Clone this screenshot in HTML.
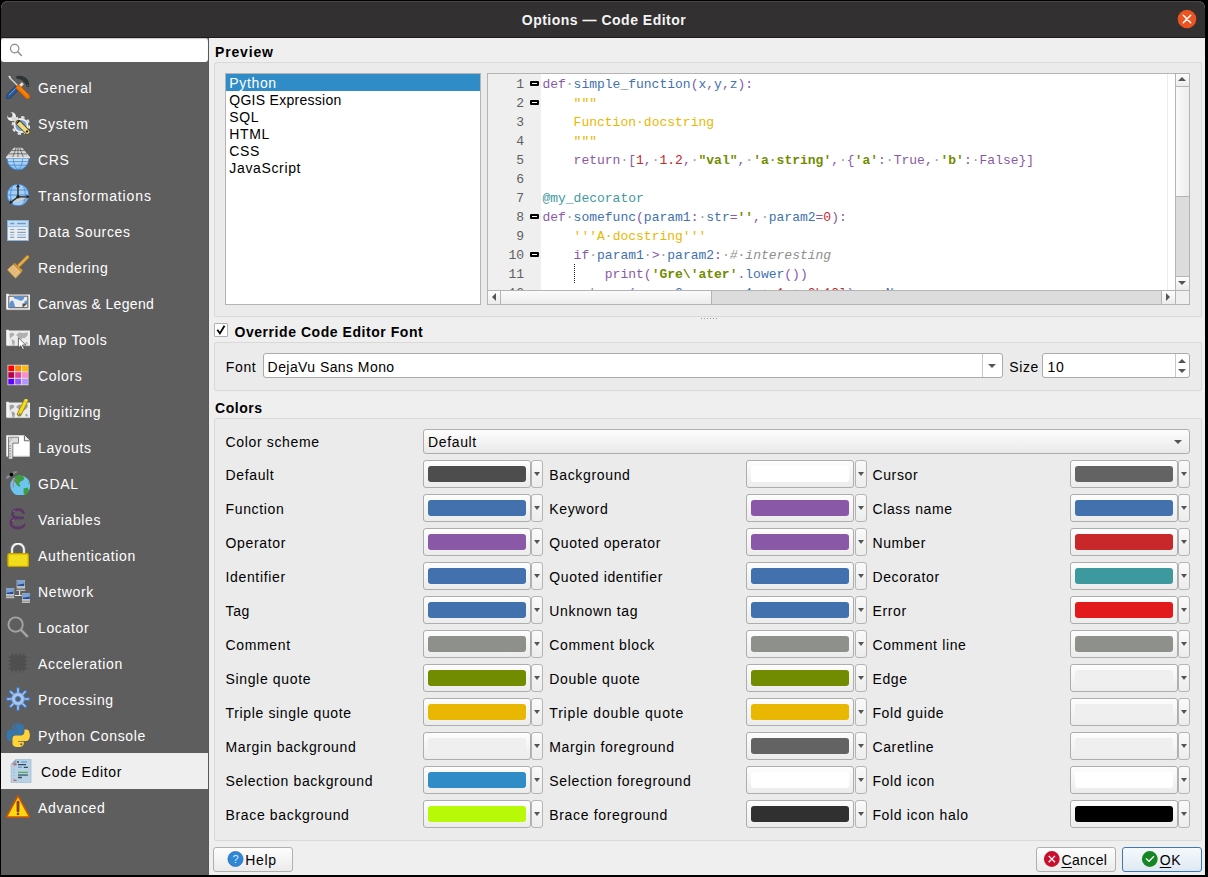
<!DOCTYPE html><html><head><meta charset="utf-8"><style>
*{margin:0;padding:0;box-sizing:border-box}
html,body{width:1208px;height:877px;overflow:hidden;background:#000}
body{position:relative;font-family:"Liberation Sans",sans-serif;font-size:14px;color:#000}
.a{position:absolute}
.t{position:absolute;white-space:nowrap;line-height:20px;height:20px;letter-spacing:0.65px}
.b{font-weight:bold;letter-spacing:0.55px}
.win{left:1px;top:1px;width:1204px;height:874px;background:#efefef;border-radius:7px 7px 0 0;overflow:hidden}
.title{left:1px;top:1px;width:1204px;height:36px;background:#323031;border-radius:7px 7px 0 0;box-shadow:inset 0 1px #474543}
.side{left:1px;top:38px;width:207px;height:837px;background:#5e5e5e}
.gb{position:absolute;border:1px solid #d9d9d9;border-radius:2px;background:#ebebeb}
.side .t{color:#fff}
.mono{font-family:"Liberation Mono",monospace;font-size:13px;letter-spacing:0;line-height:19px;height:19px}
.cbtn{position:absolute;width:108px;height:28px;border:1px solid #adadad;border-radius:3px;background:linear-gradient(#fdfdfd,#ececec)}
.cbtn i{position:absolute;left:4px;top:5px;width:98px;height:16px;border-radius:3px}
.dd{position:absolute;width:12px;height:28px;border:1px solid #b5b5b5;border-radius:3px;background:linear-gradient(#fafafa,#ececec)}
.dd:after{content:"";position:absolute;left:2px;top:11px;border-left:3.5px solid transparent;border-right:3.5px solid transparent;border-top:4px solid #555}
u{text-underline-offset:2px}
.btn{position:absolute;height:25px;border:1px solid #b0b0b0;border-radius:3px;background:linear-gradient(#fdfdfd,#ebebeb)}
</style></head><body>
<div class="a win"></div>
<div class="a title"></div>
<div class="a" style="left:1px;top:37px;width:1204px;height:1px;background:#1b1b1b"></div>
<div class="t b" style="left:0;top:10px;width:1208px;text-align:center;color:#f4f4f4;font-size:14px;letter-spacing:0.5px">Options — Code Editor</div>
<svg class="a" style="left:1177px;top:9px" width="20" height="20" viewBox="0 0 20 20"><circle cx="10" cy="10" r="9.3" fill="#e95420"/><path d="M6.3 6.3L13.7 13.7M13.7 6.3L6.3 13.7" stroke="#fff" stroke-width="1.5" stroke-linecap="round"/></svg>
<div class="a side"></div>
<div class="a" style="left:208px;top:38px;width:1px;height:837px;background:#585858"></div>
<div class="a" style="left:1px;top:38px;width:207px;height:24px;background:#fff;border-radius:3px;box-shadow:inset 0 1px 1px #c8c8c8"></div>
<svg class="a" style="left:9px;top:43px" width="16" height="16" viewBox="0 0 16 16"><circle cx="5.7" cy="5.6" r="4.2" fill="none" stroke="#8a8a8a" stroke-width="1.2"/><path d="M8.8 8.8l3.6 3.6" stroke="#8a8a8a" stroke-width="1.4" stroke-linecap="round"/></svg>
<svg class="a" style="left:6px;top:75px" width="24" height="24" viewBox="0 0 24 24"><path d="M2.6 21.4L10.5 13.5" stroke="#1d3f73" stroke-width="5.4" stroke-linecap="round"/><path d="M2.6 21.4L10.5 13.5" stroke="#2f5a96" stroke-width="4" stroke-linecap="round"/><path d="M3 20l6.5-6.5" stroke="#729fcf" stroke-width="1"/><path d="M2.2 1.3l1.6-0.6 1.2 1.5-1 1.2z" fill="#eee"/><path d="M3.5 2.5l9 9" stroke="#dcdcdc" stroke-width="1.2"/><path d="M12.3 10.8l3.5-3.5 2 2-3.5 3.5z" fill="#e4e4e4"/><path d="M9.8 1.6C14 -0.2 19.5 1.4 22.2 5.4L23.6 10.2 22.3 12.4 20.3 11.2 19.4 8.8C17.8 6 14.6 3.9 10.8 3.7z" fill="#2e3436"/><circle cx="21.8" cy="10.3" r="0.6" fill="#888"/><path d="M12.5 12.5L21.5 21.5" stroke="#ce5c00" stroke-width="5.2" stroke-linecap="round"/><path d="M12.5 12.5L21.5 21.5" stroke="#f57900" stroke-width="3.6" stroke-linecap="round"/><path d="M13.8 12.5l7.6 7.6" stroke="#fcaf3e" stroke-width="0.9" stroke-dasharray="1 0.6"/><path d="M11 12.5l2.2-2.6 2.5 2.3-2.4 2.4z" fill="#f57900"/></svg>
<div class="t" style="left:38px;top:78px;color:#fff">General</div>
<svg class="a" style="left:6px;top:111px" width="24" height="24" viewBox="0 0 24 24"><circle cx="15" cy="14.5" r="8.4" fill="none" stroke="#e6e6e4" stroke-width="2" stroke-dasharray="3.3 3.3"/><circle cx="15" cy="14.5" r="7.4" fill="#eeeeec"/><circle cx="15" cy="14.5" r="5.6" fill="#729fcf"/><circle cx="5.6" cy="5.6" r="4.4" fill="#eeeeec"/><circle cx="3.9" cy="3.9" r="2.6" fill="#5e5e5e"/><path d="M3.9 3.9L0 0" stroke="#5e5e5e" stroke-width="4"/><path d="M6.5 6.5l5 5" stroke="#d7d7d5" stroke-width="3.2"/><path d="M12.4 11.8l9 9" stroke="#5c4e17" stroke-width="5.6" stroke-linecap="round"/><path d="M12.4 11.8l9 9" stroke="#f0dc82" stroke-width="4" stroke-linecap="round"/><path d="M10.6 12.6l3-3" stroke="#1a1a1a" stroke-width="1.4"/><circle cx="21" cy="20.4" r="1.2" fill="#2e3436"/></svg>
<div class="t" style="left:38px;top:114px;color:#fff">System</div>
<svg class="a" style="left:6px;top:147px" width="24" height="24" viewBox="0 0 24 24"><defs><linearGradient id="gcrs" x1="0" y1="0" x2="0" y2="1"><stop offset="0" stop-color="#c8e6fb"/><stop offset="1" stop-color="#7db9ec"/></linearGradient></defs><path d="M1 11.6a11 11.4 0 0 0 22 0z" fill="url(#gcrs)" stroke="#3a78c8" stroke-width="0.9"/><path d="M7.3 11.6c0 4.5 1.8 9 4.7 11.4M16.7 11.6c0 4.5-1.8 9-4.7 11.4M1.6 14.6h20.8M3.4 18.2h17.2" stroke="#3d7ccc" stroke-width="0.7" fill="none"/><path d="M7.9 0.8H16.1L24.8 10.9H-0.8z" fill="#d4d4d4"/><path d="M10.2 0.8L6.5 10.9M12 0.8v10.1M13.8 0.8l3.7 10.1M5.6 3.6Q12 2.9 18.4 3.6M2.8 7Q12 6.2 21.2 7" stroke="#3a3a3a" stroke-width="0.6" fill="none"/><path d="M-0.6 10.8h25.2" stroke="#ededed" stroke-width="1.1"/></svg>
<div class="t" style="left:38px;top:150px;color:#fff">CRS</div>
<svg class="a" style="left:6px;top:183px" width="24" height="24" viewBox="0 0 24 24"><circle cx="12" cy="12" r="10.8" fill="#a5cff2" stroke="#3b7ed0" stroke-width="0.9"/><path d="M1.5 12h21M6.5 3.5c-2.5 5-2.5 12 0 17M17.5 3.5c2.5 5 2.5 12 0 17M3 7h18M3 17h18" stroke="#4a8ad6" stroke-width="0.9" fill="none"/><path d="M5.5 19.5L12 14 21 12.8 16.8 17.6z" fill="#d0d0d0"/><path d="M12 13.8V3M12 13.8h9.5M12 13.8L5.5 19" stroke="#222" stroke-width="1.3" fill="none"/><path d="M10 4.2L12 1l2 3.2zM20.5 11.8l3 2-3 2zM4 17.3l-0.5 3.4 3.5-0.7z" fill="#222"/><circle cx="12" cy="13.8" r="1.7" fill="#222"/></svg>
<div class="t" style="left:38px;top:186px;color:#fff;letter-spacing:0.88px">Transformations</div>
<svg class="a" style="left:6px;top:219px" width="24" height="24" viewBox="0 0 24 24"><rect x="1.5" y="1.5" width="21" height="20" fill="#eeeeec" stroke="#8ab4e0" stroke-width="1"/><rect x="2" y="2" width="20" height="5.6" fill="#c4def5"/><path d="M2 7.6h20" stroke="#8ab4e0" stroke-width="0.8"/><path d="M4.2 4.5h4.1M11.2 4.5h8.7" stroke="#6d9bd0" stroke-width="1.4"/><path d="M4.2 10.5h4.1M11.2 10.5h8.7M4.2 13.4h4.1M11.2 13.4h8.7M4.2 18.4h4.1M11.2 18.4h8.7" stroke="#7aa3d4" stroke-width="1.1"/><path d="M4.2 15.8h4.1M11.2 15.8h8.7" stroke="#b3c8e0" stroke-width="1.4"/></svg>
<div class="t" style="left:38px;top:222px;color:#fff">Data Sources</div>
<svg class="a" style="left:6px;top:255px" width="24" height="24" viewBox="0 0 24 24"><path d="M13.3 10.3L21.5 2" stroke="#b8801f" stroke-width="3.6" stroke-linecap="round"/><path d="M13.3 10.3L21.5 2" stroke="#e9b04a" stroke-width="2.2" stroke-linecap="round"/><path d="M7.6 8.6l1.2-0.6 7.8 7.2-0.4 1.4-1.8 0.9z" fill="#d99a30"/><path d="M1.4 14.8l6-5.6 7.8 8-5.6 6.1z" fill="#eac486"/><path d="M3 16.6l5.8-5.6M4.8 18.4l5.8-5.6M6.6 20.2l5.8-5.6M8.4 22l5.8-5.6M3.4 13.3l7.8 7.9M5.2 11.6l7.8 7.9" stroke="#d7a65a" stroke-width="0.6"/><path d="M1.4 14.8l6-5.6 7.8 8-5.6 6.1z" fill="none" stroke="#c08a3a" stroke-width="0.6"/></svg>
<div class="t" style="left:38px;top:258px;color:#fff">Rendering</div>
<svg class="a" style="left:6px;top:291px" width="24" height="24" viewBox="0 0 24 24"><path d="M1.5 3.5h22.5v15H1.5z" fill="#ececec"/><path d="M0.2 2.8h2.6v15.8H0.2z" fill="#f6f6f6"/><path d="M1.5 18.6h22.5" stroke="#d8d8d8" stroke-width="0.8"/><path d="M2.8 5.2h19v11.5h-19z" fill="#ededed" stroke="#4a4a4a" stroke-width="0.9"/><path d="M7.3 5.6h11.3c-0.5 2-1.3 3.8-3.3 4.2-2 0.3-2.6-1.5-4.6-1.5-1.6 0-3-1-3.4-2.7z" fill="#5b93d3"/><path d="M3.3 13c1-2.5 2.5-4 3.5-3.2 1.2 0.8 1.6 3.5 2.3 6.4H3.3z" fill="#5b93d3"/><path d="M19 10c1-1 2.3-0.5 2.3 0.5v2.2h-2.8c-0.3-1-0.1-2 0.5-2.7z" fill="#5b93d3"/><path d="M16.5 12.5h5l-5 4.2z" fill="#505050"/></svg>
<div class="t" style="left:38px;top:294px;color:#fff;letter-spacing:0.32px">Canvas &amp; Legend</div>
<svg class="a" style="left:6px;top:327px" width="24" height="24" viewBox="0 0 24 24"><path d="M1.5 3.5h22.5v15H1.5z" fill="#ececec"/><path d="M0.2 2.8h2.6v15.8H0.2z" fill="#f6f6f6"/><path d="M1.5 18.6h22.5" stroke="#d8d8d8" stroke-width="0.8"/><path d="M3.5 6.5l3-1 2 1.5-1 2-2 1-1.5 2zM5.5 12.5l2.5 0.5 1 2-1 3.5-1 0.5-1-3zM10 8l3-2.5 4 0.5 5-0.5-0.5 3-2 2-1.5 1-1-1-1.5 2-1.5-1-1.5-1.5zM19 15.5l2-0.5 1 2-2 0.5z" fill="#b0b0b0"/><path d="M12.4 10.7v10.3l2.4-2.3 1.9 3.8 1.6-0.8-1.9-3.7h3.3z" fill="#fff" stroke="#333" stroke-width="0.7"/></svg>
<div class="t" style="left:38px;top:330px;color:#fff">Map Tools</div>
<svg class="a" style="left:6px;top:363px" width="24" height="24" viewBox="0 0 24 24"><rect x="1.5" y="1.8" width="21" height="20.4" fill="#dedede"/><rect x="2.3" y="2.6" width="5.8" height="5.6" fill="#ff0000"/><rect x="9.2" y="2.6" width="5.8" height="5.6" fill="#ff8800"/><rect x="16.1" y="2.6" width="5.8" height="5.6" fill="#ffbb00"/><rect x="2.3" y="9.2" width="5.8" height="5.6" fill="#b5004a"/><rect x="9.2" y="9.2" width="5.8" height="5.6" fill="#e0449a"/><rect x="16.1" y="9.2" width="5.8" height="5.6" fill="#ff8ec8"/><rect x="2.3" y="15.8" width="5.8" height="5.6" fill="#6200ff"/><rect x="9.2" y="15.8" width="5.8" height="5.6" fill="#9556ff"/><rect x="16.1" y="15.8" width="5.8" height="5.6" fill="#b197ff"/></svg>
<div class="t" style="left:38px;top:366px;color:#fff">Colors</div>
<svg class="a" style="left:6px;top:399px" width="24" height="24" viewBox="0 0 24 24"><path d="M1.5 3.5h22.5v15H1.5z" fill="#ececec"/><path d="M0.2 2.8h2.6v15.8H0.2z" fill="#f6f6f6"/><path d="M1.5 18.6h22.5" stroke="#d8d8d8" stroke-width="0.8"/><path d="M3.5 6.5l3-1 2 1.5-1 2-2 1-1.5 2zM5.5 12.5l2.5 0.5 1 2-1 3.5-1 0.5-1-3zM10 8l3-2.5 4 0.5 5-0.5-0.5 3-2 2-1.5 1-1-1-1.5 2-1.5-1-1.5-1.5zM19 15.5l2-0.5 1 2-2 0.5z" fill="#a0a0a0"/><path d="M13.4 15L20 1.5" stroke="#8f7a1a" stroke-width="4.8" stroke-linecap="round"/><path d="M13.6 14.6L20 1.6" stroke="#edd400" stroke-width="3.4" stroke-linecap="round"/><path d="M14.8 12.5L19.2 3.3" stroke="#fce94f" stroke-width="0.9"/><path d="M12.3 17.2l0.9-3.2 2.5 1.2z" fill="#888"/><path d="M19 0.6l2 1" stroke="#ddd" stroke-width="1.4"/></svg>
<div class="t" style="left:38px;top:402px;color:#fff">Digitizing</div>
<svg class="a" style="left:6px;top:435px" width="24" height="24" viewBox="0 0 24 24"><path d="M0.6 0.6h17.8l5.2 5.2v15.4H0.6z" fill="#fff" stroke="#d6d6d6" stroke-width="1"/><path d="M18.4 0.6v5.2h5.2" fill="#eee" stroke="#555" stroke-width="0.9"/><path d="M2.5 2.2h10v6H6.8v16H2.5z" fill="#dcdcdc" stroke="#666" stroke-width="0.8"/><path d="M3 7l3 -4" stroke="#888" stroke-width="0.6"/><path d="M2.8 11h2M2.8 13.5h2M2.8 16h2M2.8 18.8h2M2.8 21.2h2" stroke="#777" stroke-width="0.8"/></svg>
<div class="t" style="left:38px;top:438px;color:#fff">Layouts</div>
<svg class="a" style="left:6px;top:471px" width="24" height="24" viewBox="0 0 24 24"><circle cx="14.2" cy="14.6" r="10" fill="#6dc5ef"/><path d="M9 5.5l3-1.5 4.5 0.8 2 2.2-1.5 2.5-3 1.2-1 2.2 1.5 1.3-1 1.5-2.5-1.5-1.2-2.5-1.8-1.2z" fill="#3a9e3f"/><path d="M17.5 17.5l4-1 1.2 2.2-1 3.5-2.2 2-1.8-1.5z" fill="#3a9e3f"/><path d="M22.5 10l1 2.5-0.8 1.5z" fill="#3a9e3f"/><path d="M0 7l11-7" stroke="#7b7b7b" stroke-width="3"/><path d="M0.5 7l10.5-6.6" stroke="#999" stroke-width="1" stroke-dasharray="1.2 0.8"/><circle cx="5.4" cy="3.6" r="1.9" fill="#000"/><path d="M8 8l-1 8.5M8 8l4.5 2" stroke="#e06060" stroke-width="0.8" fill="none"/></svg>
<div class="t" style="left:38px;top:474px;color:#fff">GDAL</div>
<svg class="a" style="left:6px;top:507px" width="24" height="24" viewBox="0 0 24 24"><path d="M17.5 5.8c-0.3-2.8-4-3.5-6.8-3.2-2.8 0.4-4.6 2.4-4.2 4.8 0.3 2 2.2 3.3 4.5 3.5h5.8" fill="none" stroke="#5c3566" stroke-width="2.6" stroke-linecap="round"/><path d="M10.5 10.9c-3.2 0.2-5.8 2.2-5.6 5.2 0.2 3.2 3.3 4.9 6.6 4.9 3.2 0 5.6-1.3 6.6-3.4" fill="none" stroke="#5c3566" stroke-width="2.8" stroke-linecap="round"/><path d="M7.5 5c0.5-0.8 1-1.2 1.8-1.5M6.3 14c0.5-0.8 1-1.1 1.8-1.4M16.6 17.2l0.9-0.6" stroke="#b18ac0" stroke-width="0.9"/></svg>
<div class="t" style="left:38px;top:510px;color:#fff">Variables</div>
<svg class="a" style="left:6px;top:543px" width="24" height="24" viewBox="0 0 24 24"><path d="M6 10.2V6.6a6 6 0 0 1 12 0v3.6" fill="none" stroke="#8a8a8a" stroke-width="3.2"/><path d="M6 10.2V6.6a6 6 0 0 1 12 0v3.6" fill="none" stroke="#fafafa" stroke-width="1.7"/><rect x="1.8" y="10.6" width="20.6" height="13" rx="1.6" fill="#edd400" stroke="#c4a000" stroke-width="1.2"/><rect x="3.4" y="12.2" width="17.4" height="9.8" fill="#f2dc1e"/></svg>
<div class="t" style="left:38px;top:546px;color:#fff">Authentication</div>
<svg class="a" style="left:6px;top:579px" width="24" height="24" viewBox="0 0 24 24"><path d="M13.6 11.5v5M9 16.5h6.8" stroke="#e8e8e8" stroke-width="1.1"/><rect x="10.7" y="1" width="8.3" height="7.4" rx="0.5" fill="#dcdcdc"/><rect x="11.3" y="1.6" width="7.1" height="5.6" fill="#234f96"/><path d="M11.3 1.6h7.1v2.8c-2.5 0.3-5 1-7.1 1.3z" fill="#7ea2d3"/><rect x="10.7" y="8.4" width="8.3" height="1.2" fill="#c9c9c9"/><rect x="10.4" y="10.8" width="8.9" height="1" fill="#d4d4d4"/><rect x="-0.2" y="9" width="8.4" height="7.4" rx="0.5" fill="#dcdcdc"/><rect x="0.4" y="9.6" width="7.2" height="5.6" fill="#234f96"/><path d="M0.4 9.6h7.2v2.8c-2.5 0.3-5 1-7.2 1.3z" fill="#7ea2d3"/><rect x="-0.2" y="16.4" width="8.4" height="1.2" fill="#c9c9c9"/><rect x="-0.4" y="18.2" width="8.8" height="1" fill="#d4d4d4"/><rect x="16" y="14" width="8.4" height="7.4" rx="0.5" fill="#dcdcdc"/><rect x="16.6" y="14.6" width="7.2" height="5.6" fill="#234f96"/><path d="M16.6 14.6h7.2v2.8c-2.5 0.3-5 1-7.2 1.3z" fill="#7ea2d3"/><rect x="16" y="21.4" width="8.4" height="1.2" fill="#c9c9c9"/><rect x="15.8" y="23.2" width="8.8" height="1" fill="#d4d4d4"/></svg>
<div class="t" style="left:38px;top:582px;color:#fff">Network</div>
<svg class="a" style="left:6px;top:615px" width="24" height="24" viewBox="0 0 24 24"><circle cx="9.6" cy="9.6" r="7.2" fill="none" stroke="#a3a3a3" stroke-width="1.9"/><path d="M15.2 15.2l5.9 5.9" stroke="#a3a3a3" stroke-width="2.6" stroke-linecap="round"/></svg>
<div class="t" style="left:38px;top:618px;color:#fff">Locator</div>
<svg class="a" style="left:6px;top:651px" width="24" height="24" viewBox="0 0 24 24"><rect x="4.3" y="4.3" width="15" height="15" fill="#4f4f4f"/><path d="M6.2 2v3M10 2v3M13.8 2v3M17.6 2v3M6.2 18.5v3M10 18.5v3M13.8 18.5v3M17.6 18.5v3M2 6.2h3M2 10h3M2 13.8h3M2 17.6h3M18.5 6.2h3M18.5 10h3M18.5 13.8h3M18.5 17.6h3" stroke="#4f4f4f" stroke-width="1.1"/></svg>
<div class="t" style="left:38px;top:654px;color:#fff">Acceleration</div>
<svg class="a" style="left:6px;top:687px" width="24" height="24" viewBox="0 0 24 24"><path d="M12 1.5v21M1.5 12h21M4.6 4.6l14.8 14.8M19.4 4.6L4.6 19.4" stroke="#3b7bd4" stroke-width="3.4" stroke-linecap="round"/><path d="M12 1.7v20.6M1.7 12h20.6M4.8 4.8l14.4 14.4M19.2 4.8L4.8 19.2" stroke="#a9c5ea" stroke-width="1.6" stroke-linecap="round"/><circle cx="12" cy="12" r="6.4" fill="#a9c5ea" stroke="#5a90da" stroke-width="0.6"/><circle cx="12" cy="12" r="2.5" fill="#5e5e5e" stroke="#3b7bd4" stroke-width="1"/></svg>
<div class="t" style="left:38px;top:690px;color:#fff">Processing</div>
<svg class="a" style="left:6px;top:723px" width="24" height="24" viewBox="0 0 24 24"><g transform="translate(0.3 0.3) scale(0.212)"><path d="M54.9 1.1c-4.6 0-9 .4-12.8 1.1C30.8 4.2 28.8 8.3 28.8 16v10.1h26.6v3.4H18.8c-7.7 0-14.5 4.6-16.6 13.4-2.4 10.1-2.5 16.4 0 26.9 1.9 7.8 6.4 13.4 14.1 13.4h9.1V71.1c0-8.7 7.6-16.5 16.6-16.5h26.5c7.4 0 13.3-6.1 13.3-13.5V16c0-7.2-6.1-12.6-13.3-13.8-4.6-.8-9.3-1.1-13.8-1.1zM40.5 9.2c2.7 0 5 2.3 5 5.1 0 2.8-2.2 5-5 5-2.8 0-5-2.3-5-5 0-2.8 2.2-5.1 5-5.1z" fill="#3776ab"/><path d="M85.6 29.5v11.7c0 9.1-7.7 16.7-16.6 16.7H42.5c-7.3 0-13.3 6.2-13.3 13.5v25.4c0 7.2 6.3 11.5 13.3 13.5 8.4 2.5 16.5 2.9 26.6 0 6.7-1.9 13.3-5.8 13.3-13.5V86.7H55.8v-3.4h39.9c7.7 0 10.6-5.4 13.3-13.4 2.8-8.3 2.7-16.3 0-26.9-1.9-7.7-5.6-13.4-13.3-13.4h-10.1zM70.7 93.8c2.8 0 5 2.2 5 5 0 2.8-2.3 5.1-5 5.1-2.8 0-5-2.3-5-5.1 0-2.8 2.3-5 5-5z" fill="#ffd43b"/></g></svg>
<div class="t" style="left:38px;top:726px;color:#fff">Python Console</div>
<div class="a" style="left:1px;top:753px;width:207px;height:36px;background:#efefef"></div>
<svg class="a" style="left:9px;top:759px" width="24" height="24" viewBox="0 0 24 24"><path d="M2.1 5.2L7.3 0.1H22v23.6H2.1z" fill="#b8d1e5" stroke="#9cb8cf" stroke-width="0.7"/><path d="M2.1 5.2L7.3 0.1v5.1z" fill="#8faac0"/><path d="M8 3h2M9 5.6h8M14.8 8.3h4.1M9 18.5h3.9" stroke="#34495e" stroke-width="1.3"/><path d="M12 3h6M9 8.3h3.9" stroke="#6fa5dc" stroke-width="1.4"/><path d="M4.5 5.5h3.1M4.5 21.4h3.1" stroke="#d9584a" stroke-width="1.3"/><path d="M9 13.4h9.9" stroke="#55b06a" stroke-width="1.4"/><path d="M9 16.1h9.9" stroke="#627a93" stroke-width="1.9"/><path d="M4.2 7.4h1.7M4.2 10.5h1.7M4.2 13.4h1.7M4.2 16.5h1.7M4.2 19.6h1.7" stroke="#93a9bd" stroke-width="0.6"/></svg>
<div class="t" style="left:41px;top:762px;color:#000">Code Editor</div>
<svg class="a" style="left:6px;top:795px" width="24" height="24" viewBox="0 0 24 24"><path d="M12 0.9L23.6 22.1H0.4z" fill="#fbd80f" stroke="#d35400" stroke-width="1.5" stroke-linejoin="round"/><path d="M12 7.2v8.8" stroke="#8f3b0a" stroke-width="2.8" stroke-linecap="round"/><circle cx="12" cy="19" r="1.3" fill="#8f3b0a"/></svg>
<div class="t" style="left:38px;top:798px;color:#fff">Advanced</div>
<div class="t b" style="left:215px;top:42.3px;;letter-spacing:0.83px">Preview</div>
<div class="gb" style="left:214px;top:62px;width:988px;height:255px"></div>
<div class="a" style="left:225px;top:73px;width:256px;height:232px;background:#fff;border:1px solid #b4b4b4"></div>
<div class="a" style="left:226px;top:74px;width:254px;height:17px;background:#308cc6"></div>
<div class="t" style="left:229.3px;top:72.9px;color:#fff">Python</div>
<div class="t" style="left:229.3px;top:89.9px;;letter-spacing:0.27px">QGIS Expression</div>
<div class="t" style="left:229.3px;top:106.9px;">SQL</div>
<div class="t" style="left:229.3px;top:123.9px;">HTML</div>
<div class="t" style="left:229.3px;top:140.9px;">CSS</div>
<div class="t" style="left:229.3px;top:157.9px;">JavaScript</div>
<div class="a" style="left:701px;top:318px;width:1px;height:1px;background:#9a9a9a"></div>
<div class="a" style="left:704px;top:318px;width:1px;height:1px;background:#9a9a9a"></div>
<div class="a" style="left:707px;top:318px;width:1px;height:1px;background:#9a9a9a"></div>
<div class="a" style="left:710px;top:318px;width:1px;height:1px;background:#9a9a9a"></div>
<div class="a" style="left:713px;top:318px;width:1px;height:1px;background:#9a9a9a"></div>
<div class="a" style="left:716px;top:318px;width:1px;height:1px;background:#9a9a9a"></div>
<div class="a" style="left:487px;top:73px;width:703px;height:232px;background:#fff;border:1px solid #b4b4b4"></div>
<div class="a" style="left:488px;top:74px;width:53px;height:216px;background:#efefef"></div>
<div class="a" style="left:1167px;top:74px;width:1px;height:216px;background:#ececec"></div>
<div class="a" style="left:488px;top:74px;width:679px;height:216px;overflow:hidden">
<div class="t mono" style="left:-164px;top:1.04px;width:200px;text-align:right;color:#5f5f5f">1</div>
<div class="t mono" style="left:54.39999999999998px;top:1.04px;white-space:pre"><span style="color:#8959a8">def</span><span style="color:#9a9a9a">·</span><span style="color:#4271ae">simple_function</span><span style="color:#8959a8">(</span><span style="color:#4271ae">x</span><span style="color:#8959a8">,</span><span style="color:#4271ae">y</span><span style="color:#8959a8">,</span><span style="color:#4271ae">z</span><span style="color:#8959a8">):</span></div>
<div class="a" style="left:42px;top:6.8px;width:9px;height:5px;background:#000;border-radius:1px"></div>
<div class="a" style="left:44px;top:8.8px;width:5px;height:1px;background:#fff"></div>
<div class="t mono" style="left:-164px;top:20.04px;width:200px;text-align:right;color:#5f5f5f">2</div>
<div class="t mono" style="left:54.39999999999998px;top:20.04px;white-space:pre">    <span style="color:#eab700">&quot;&quot;&quot;</span></div>
<div class="a" style="left:42px;top:25.8px;width:9px;height:5px;background:#000;border-radius:1px"></div>
<div class="a" style="left:44px;top:27.8px;width:5px;height:1px;background:#fff"></div>
<div class="t mono" style="left:-164px;top:39.04px;width:200px;text-align:right;color:#5f5f5f">3</div>
<div class="t mono" style="left:54.39999999999998px;top:39.04px;white-space:pre">    <span style="color:#eab700">Function</span><span style="color:#eab700">·</span><span style="color:#eab700">docstring</span></div>
<div class="t mono" style="left:-164px;top:58.04px;width:200px;text-align:right;color:#5f5f5f">4</div>
<div class="t mono" style="left:54.39999999999998px;top:58.04px;white-space:pre">    <span style="color:#eab700">&quot;&quot;&quot;</span></div>
<div class="t mono" style="left:-164px;top:77.04px;width:200px;text-align:right;color:#5f5f5f">5</div>
<div class="t mono" style="left:54.39999999999998px;top:77.04px;white-space:pre">    <span style="color:#8959a8">return</span><span style="color:#9a9a9a">·</span><span style="color:#8959a8">[</span><span style="color:#c82829">1</span><span style="color:#8959a8">,</span><span style="color:#9a9a9a">·</span><span style="color:#c82829">1.2</span><span style="color:#8959a8">,</span><span style="color:#9a9a9a">·</span><span style="color:#718c00;font-weight:bold">&quot;val&quot;</span><span style="color:#8959a8">,</span><span style="color:#9a9a9a">·</span><span style="color:#718c00;font-weight:bold">&#x27;a</span><span style="color:#718c00">·</span><span style="color:#718c00;font-weight:bold">string&#x27;</span><span style="color:#8959a8">,</span><span style="color:#9a9a9a">·</span><span style="color:#8959a8">{</span><span style="color:#718c00;font-weight:bold">&#x27;a&#x27;</span><span style="color:#8959a8">:</span><span style="color:#9a9a9a">·</span><span style="color:#8959a8">True</span><span style="color:#8959a8">,</span><span style="color:#9a9a9a">·</span><span style="color:#718c00;font-weight:bold">&#x27;b&#x27;</span><span style="color:#8959a8">:</span><span style="color:#9a9a9a">·</span><span style="color:#8959a8">False</span><span style="color:#8959a8">}]</span></div>
<div class="t mono" style="left:-164px;top:96.04px;width:200px;text-align:right;color:#5f5f5f">6</div>
<div class="t mono" style="left:54.39999999999998px;top:96.04px;white-space:pre"></div>
<div class="t mono" style="left:-164px;top:115.04px;width:200px;text-align:right;color:#5f5f5f">7</div>
<div class="t mono" style="left:54.39999999999998px;top:115.04px;white-space:pre"><span style="color:#3e999f">@my_decorator</span></div>
<div class="t mono" style="left:-164px;top:134.04px;width:200px;text-align:right;color:#5f5f5f">8</div>
<div class="t mono" style="left:54.39999999999998px;top:134.04px;white-space:pre"><span style="color:#8959a8">def</span><span style="color:#9a9a9a">·</span><span style="color:#4271ae">somefunc</span><span style="color:#8959a8">(</span><span style="color:#4271ae">param1</span><span style="color:#8959a8">:</span><span style="color:#9a9a9a">·</span><span style="color:#4271ae">str</span><span style="color:#8959a8">=</span><span style="color:#718c00;font-weight:bold">&#x27;&#x27;</span><span style="color:#8959a8">,</span><span style="color:#9a9a9a">·</span><span style="color:#4271ae">param2</span><span style="color:#8959a8">=</span><span style="color:#c82829">0</span><span style="color:#8959a8">):</span></div>
<div class="a" style="left:42px;top:139.8px;width:9px;height:5px;background:#000;border-radius:1px"></div>
<div class="a" style="left:44px;top:141.8px;width:5px;height:1px;background:#fff"></div>
<div class="t mono" style="left:-164px;top:153.04px;width:200px;text-align:right;color:#5f5f5f">9</div>
<div class="t mono" style="left:54.39999999999998px;top:153.04px;white-space:pre">    <span style="color:#eab700">&#x27;&#x27;&#x27;A</span><span style="color:#eab700">·</span><span style="color:#eab700">docstring&#x27;&#x27;&#x27;</span></div>
<div class="t mono" style="left:-164px;top:172.04px;width:200px;text-align:right;color:#5f5f5f">10</div>
<div class="t mono" style="left:54.39999999999998px;top:172.04px;white-space:pre">    <span style="color:#8959a8">if</span><span style="color:#9a9a9a">·</span><span style="color:#4271ae">param1</span><span style="color:#9a9a9a">·</span><span style="color:#8959a8">&gt;</span><span style="color:#9a9a9a">·</span><span style="color:#4271ae">param2</span><span style="color:#8959a8">:</span><span style="color:#9a9a9a">·</span><span style="color:#8e908c;font-style:italic">#</span><span style="color:#8e908c">·</span><span style="color:#8e908c;font-style:italic">interesting</span></div>
<div class="a" style="left:42px;top:177.8px;width:9px;height:5px;background:#000;border-radius:1px"></div>
<div class="a" style="left:44px;top:179.8px;width:5px;height:1px;background:#fff"></div>
<div class="t mono" style="left:-164px;top:191.04px;width:200px;text-align:right;color:#5f5f5f">11</div>
<div class="t mono" style="left:54.39999999999998px;top:191.04px;white-space:pre">        <span style="color:#8959a8">print</span><span style="color:#8959a8">(</span><span style="color:#718c00;font-weight:bold">&#x27;Gre\&#x27;ater&#x27;</span><span style="color:#8959a8">.</span><span style="color:#4271ae">lower</span><span style="color:#8959a8">())</span></div>
<div class="t mono" style="left:-164px;top:210.04px;width:200px;text-align:right;color:#5f5f5f">12</div>
<div class="t mono" style="left:54.39999999999998px;top:210.04px;white-space:pre">    <span style="color:#8959a8">return</span><span style="color:#9a9a9a">·</span><span style="color:#8959a8">(</span><span style="color:#4271ae">param2</span><span style="color:#9a9a9a">·</span><span style="color:#8959a8">-</span><span style="color:#9a9a9a">·</span><span style="color:#4271ae">param1</span><span style="color:#9a9a9a">·</span><span style="color:#8959a8">+</span><span style="color:#9a9a9a">·</span><span style="color:#c82829">1</span><span style="color:#9a9a9a">·</span><span style="color:#8959a8">+</span><span style="color:#9a9a9a">·</span><span style="color:#c82829">0b10l</span><span style="color:#8959a8">)</span><span style="color:#9a9a9a">·</span><span style="color:#8959a8">or</span><span style="color:#9a9a9a">·</span><span style="color:#4271ae">None</span></div>
<div class="t mono" style="left:-164px;top:229.04px;width:200px;text-align:right;color:#5f5f5f">13</div>
<div class="t mono" style="left:54.39999999999998px;top:229.04px;white-space:pre"></div>
<div class="a" style="left:86px;top:190px;width:0;height:19px;border-left:1px dotted #222"></div>
</div>
<div class="a" style="left:1175px;top:73px;width:15px;height:218px;background:#dcdcdc;border:1px solid #b4b4b4;border-bottom:none"></div>
<div class="a" style="left:1176px;top:74px;width:13px;height:13px;background:linear-gradient(#fdfdfd,#ebebeb);border-bottom:1px solid #b4b4b4"></div>
<div class="a" style="left:1176px;top:87px;width:13px;height:110px;background:linear-gradient(90deg,#fbfbfb,#ececec);border-bottom:1px solid #b4b4b4"></div>
<div class="a" style="left:1176px;top:276px;width:13px;height:14px;background:linear-gradient(#fdfdfd,#ebebeb);border-top:1px solid #b4b4b4"></div>
<div class="a" style="left:1178px;top:77px;width:0;height:0;border-left:4px solid transparent;border-right:4px solid transparent;border-bottom:4px solid #555"></div>
<div class="a" style="left:1178px;top:281px;width:0;height:0;border-left:4px solid transparent;border-right:4px solid transparent;border-top:4px solid #555"></div>
<div class="a" style="left:487px;top:290px;width:703px;height:15px;background:#dcdcdc;border:1px solid #b4b4b4"></div>
<div class="a" style="left:488px;top:291px;width:13px;height:13px;background:linear-gradient(#fdfdfd,#ebebeb);border-right:1px solid #b4b4b4"></div>
<div class="a" style="left:501px;top:291px;width:211px;height:13px;background:linear-gradient(#fbfbfb,#ececec);border-right:1px solid #b4b4b4"></div>
<div class="a" style="left:1161px;top:291px;width:14px;height:13px;background:linear-gradient(#fdfdfd,#ebebeb);border-left:1px solid #b4b4b4"></div>
<div class="a" style="left:1175px;top:291px;width:14px;height:13px;background:#efefef;border-left:1px solid #b4b4b4"></div>
<div class="a" style="left:492px;top:293px;width:0;height:0;border-top:4px solid transparent;border-bottom:4px solid transparent;border-right:4px solid #555"></div>
<div class="a" style="left:1166px;top:293px;width:0;height:0;border-top:4px solid transparent;border-bottom:4px solid transparent;border-left:4px solid #555"></div>
<div class="a" style="left:214px;top:323px;width:14px;height:14px;background:#fff;border:1px solid #b0b0b0;border-radius:1px"></div>
<svg class="a" style="left:214px;top:323px" width="14" height="14" viewBox="0 0 14 14"><path d="M3.3 6.8l2.6 3.6 4.6-7.6" fill="none" stroke="#000" stroke-width="1.8"/></svg>
<div class="t b" style="left:234.5px;top:321.9px;">Override Code Editor Font</div>
<div class="gb" style="left:214px;top:342px;width:988px;height:49px"></div>
<div class="t" style="left:225.8px;top:357.1px;">Font</div>
<div class="a" style="left:263px;top:353px;width:740px;height:25px;background:#fff;border:1px solid #aaa;border-radius:3px"></div>
<div class="a" style="left:982px;top:354px;width:1px;height:23px;background:#c8c8c8"></div>
<div class="a" style="left:988px;top:364px;width:0;height:0;border-left:4px solid transparent;border-right:4px solid transparent;border-top:4px solid #555"></div>
<div class="t" style="left:267.6px;top:357.1px;;letter-spacing:0.43px">DejaVu Sans Mono</div>
<div class="t" style="left:1009.2px;top:357.1px;">Size</div>
<div class="a" style="left:1042px;top:353px;width:148px;height:25px;background:#fff;border:1px solid #aaa;border-radius:3px"></div>
<div class="a" style="left:1175px;top:354px;width:1px;height:23px;background:#c8c8c8"></div>
<div class="a" style="left:1178px;top:359px;width:0;height:0;border-left:4px solid transparent;border-right:4px solid transparent;border-bottom:4px solid #555"></div>
<div class="a" style="left:1178px;top:369px;width:0;height:0;border-left:4px solid transparent;border-right:4px solid transparent;border-top:4px solid #555"></div>
<div class="t" style="left:1047.6px;top:357.1px;">10</div>
<div class="t b" style="left:215px;top:397.8px;">Colors</div>
<div class="gb" style="left:214px;top:418px;width:988px;height:423px"></div>
<div class="t" style="left:225.5px;top:431.9px;">Color scheme</div>
<div class="a" style="left:423px;top:429px;width:767px;height:25px;background:linear-gradient(#fdfdfd,#e9e9e9);border:1px solid #adadad;border-radius:3px"></div>
<div class="t" style="left:428px;top:431.9px;">Default</div>
<div class="a" style="left:1174px;top:440px;width:0;height:0;border-left:4px solid transparent;border-right:4px solid transparent;border-top:4px solid #555"></div>
<div class="t" style="left:225.5px;top:465.2px;">Default</div>
<div class="cbtn" style="left:423px;top:460px"><i style="background:#4d4d4d"></i></div>
<div class="dd" style="left:531px;top:460px"></div>
<div class="t" style="left:549.3px;top:465.2px;">Background</div>
<div class="cbtn" style="left:746px;top:460px"><i style="background:#ffffff"></i></div>
<div class="dd" style="left:855px;top:460px"></div>
<div class="t" style="left:872.4px;top:465.2px;">Cursor</div>
<div class="cbtn" style="left:1070px;top:460px"><i style="background:#636363"></i></div>
<div class="dd" style="left:1178px;top:460px"></div>
<div class="t" style="left:225.5px;top:499.2px;">Function</div>
<div class="cbtn" style="left:423px;top:494px"><i style="background:#4271ae"></i></div>
<div class="dd" style="left:531px;top:494px"></div>
<div class="t" style="left:549.3px;top:499.2px;">Keyword</div>
<div class="cbtn" style="left:746px;top:494px"><i style="background:#8959a8"></i></div>
<div class="dd" style="left:855px;top:494px"></div>
<div class="t" style="left:872.4px;top:499.2px;">Class name</div>
<div class="cbtn" style="left:1070px;top:494px"><i style="background:#4271ae"></i></div>
<div class="dd" style="left:1178px;top:494px"></div>
<div class="t" style="left:225.5px;top:533.2px;">Operator</div>
<div class="cbtn" style="left:423px;top:528px"><i style="background:#8959a8"></i></div>
<div class="dd" style="left:531px;top:528px"></div>
<div class="t" style="left:549.3px;top:533.2px;">Quoted operator</div>
<div class="cbtn" style="left:746px;top:528px"><i style="background:#8959a8"></i></div>
<div class="dd" style="left:855px;top:528px"></div>
<div class="t" style="left:872.4px;top:533.2px;">Number</div>
<div class="cbtn" style="left:1070px;top:528px"><i style="background:#c82829"></i></div>
<div class="dd" style="left:1178px;top:528px"></div>
<div class="t" style="left:225.5px;top:567.2px;">Identifier</div>
<div class="cbtn" style="left:423px;top:562px"><i style="background:#4271ae"></i></div>
<div class="dd" style="left:531px;top:562px"></div>
<div class="t" style="left:549.3px;top:567.2px;">Quoted identifier</div>
<div class="cbtn" style="left:746px;top:562px"><i style="background:#4271ae"></i></div>
<div class="dd" style="left:855px;top:562px"></div>
<div class="t" style="left:872.4px;top:567.2px;">Decorator</div>
<div class="cbtn" style="left:1070px;top:562px"><i style="background:#3e999f"></i></div>
<div class="dd" style="left:1178px;top:562px"></div>
<div class="t" style="left:225.5px;top:601.2px;">Tag</div>
<div class="cbtn" style="left:423px;top:596px"><i style="background:#4271ae"></i></div>
<div class="dd" style="left:531px;top:596px"></div>
<div class="t" style="left:549.3px;top:601.2px;">Unknown tag</div>
<div class="cbtn" style="left:746px;top:596px"><i style="background:#4271ae"></i></div>
<div class="dd" style="left:855px;top:596px"></div>
<div class="t" style="left:872.4px;top:601.2px;">Error</div>
<div class="cbtn" style="left:1070px;top:596px"><i style="background:#e31a1c"></i></div>
<div class="dd" style="left:1178px;top:596px"></div>
<div class="t" style="left:225.5px;top:635.2px;">Comment</div>
<div class="cbtn" style="left:423px;top:630px"><i style="background:#8e908c"></i></div>
<div class="dd" style="left:531px;top:630px"></div>
<div class="t" style="left:549.3px;top:635.2px;">Comment block</div>
<div class="cbtn" style="left:746px;top:630px"><i style="background:#8e908c"></i></div>
<div class="dd" style="left:855px;top:630px"></div>
<div class="t" style="left:872.4px;top:635.2px;">Comment line</div>
<div class="cbtn" style="left:1070px;top:630px"><i style="background:#8e908c"></i></div>
<div class="dd" style="left:1178px;top:630px"></div>
<div class="t" style="left:225.5px;top:669.2px;">Single quote</div>
<div class="cbtn" style="left:423px;top:664px"><i style="background:#718c00"></i></div>
<div class="dd" style="left:531px;top:664px"></div>
<div class="t" style="left:549.3px;top:669.2px;">Double quote</div>
<div class="cbtn" style="left:746px;top:664px"><i style="background:#718c00"></i></div>
<div class="dd" style="left:855px;top:664px"></div>
<div class="t" style="left:872.4px;top:669.2px;">Edge</div>
<div class="cbtn" style="left:1070px;top:664px"><i style="background:#efefef"></i></div>
<div class="dd" style="left:1178px;top:664px"></div>
<div class="t" style="left:225.5px;top:703.2px;">Triple single quote</div>
<div class="cbtn" style="left:423px;top:698px"><i style="background:#eab700"></i></div>
<div class="dd" style="left:531px;top:698px"></div>
<div class="t" style="left:549.3px;top:703.2px;;letter-spacing:0.81px">Triple double quote</div>
<div class="cbtn" style="left:746px;top:698px"><i style="background:#eab700"></i></div>
<div class="dd" style="left:855px;top:698px"></div>
<div class="t" style="left:872.4px;top:703.2px;">Fold guide</div>
<div class="cbtn" style="left:1070px;top:698px"><i style="background:#efefef"></i></div>
<div class="dd" style="left:1178px;top:698px"></div>
<div class="t" style="left:225.5px;top:737.2px;">Margin background</div>
<div class="cbtn" style="left:423px;top:732px"><i style="background:#efefef"></i></div>
<div class="dd" style="left:531px;top:732px"></div>
<div class="t" style="left:549.3px;top:737.2px;">Margin foreground</div>
<div class="cbtn" style="left:746px;top:732px"><i style="background:#636363"></i></div>
<div class="dd" style="left:855px;top:732px"></div>
<div class="t" style="left:872.4px;top:737.2px;">Caretline</div>
<div class="cbtn" style="left:1070px;top:732px"><i style="background:#efefef"></i></div>
<div class="dd" style="left:1178px;top:732px"></div>
<div class="t" style="left:225.5px;top:771.2px;">Selection background</div>
<div class="cbtn" style="left:423px;top:766px"><i style="background:#308cc6"></i></div>
<div class="dd" style="left:531px;top:766px"></div>
<div class="t" style="left:549.3px;top:771.2px;">Selection foreground</div>
<div class="cbtn" style="left:746px;top:766px"><i style="background:#ffffff"></i></div>
<div class="dd" style="left:855px;top:766px"></div>
<div class="t" style="left:872.4px;top:771.2px;">Fold icon</div>
<div class="cbtn" style="left:1070px;top:766px"><i style="background:#ffffff"></i></div>
<div class="dd" style="left:1178px;top:766px"></div>
<div class="t" style="left:225.5px;top:805.2px;">Brace background</div>
<div class="cbtn" style="left:423px;top:800px"><i style="background:#b7f907"></i></div>
<div class="dd" style="left:531px;top:800px"></div>
<div class="t" style="left:549.3px;top:805.2px;">Brace foreground</div>
<div class="cbtn" style="left:746px;top:800px"><i style="background:#303030"></i></div>
<div class="dd" style="left:855px;top:800px"></div>
<div class="t" style="left:872.4px;top:805.2px;">Fold icon halo</div>
<div class="cbtn" style="left:1070px;top:800px"><i style="background:#000000"></i></div>
<div class="dd" style="left:1178px;top:800px"></div>
<div class="btn" style="left:213px;top:847px;width:80px"></div>
<svg class="a" style="left:227px;top:851px" width="17" height="17" viewBox="0 0 17 17"><circle cx="8.5" cy="8" r="7.6" fill="#2e86d6" stroke="#1f5f9e" stroke-width="0.6"/><text x="8.5" y="12.3" text-anchor="middle" font-family="Liberation Sans" font-size="11" fill="#dfefff">?</text></svg>
<div class="t" style="left:245.3px;top:849.5px;">Help</div>
<div class="btn" style="left:1036px;top:847px;width:80px"></div>
<svg class="a" style="left:1043px;top:850px" width="18" height="18" viewBox="0 0 18 18"><circle cx="8.8" cy="9" r="7.9" fill="#c8102e"/><path d="M5.7 5.9l6.3 6.3M12 5.9l-6.3 6.3" stroke="#fff" stroke-width="1.3"/></svg>
<div class="t" style="left:1061.4px;top:849.9px;;letter-spacing:0.4px"><u>C</u>ancel</div>
<div class="btn" style="left:1122px;top:847px;width:80px;border-color:#3c78b8;background:linear-gradient(#f5f9fc,#dfe9f2)"></div>
<svg class="a" style="left:1141px;top:850px" width="18" height="18" viewBox="0 0 18 18"><circle cx="8.8" cy="9" r="7.9" fill="#158624"/><path d="M4.9 8.4l3.1 2.9 4.9-5" fill="none" stroke="#fff" stroke-width="1.3"/></svg>
<div class="t" style="left:1159.7px;top:849.9px;"><u>O</u>K</div>
</body></html>
